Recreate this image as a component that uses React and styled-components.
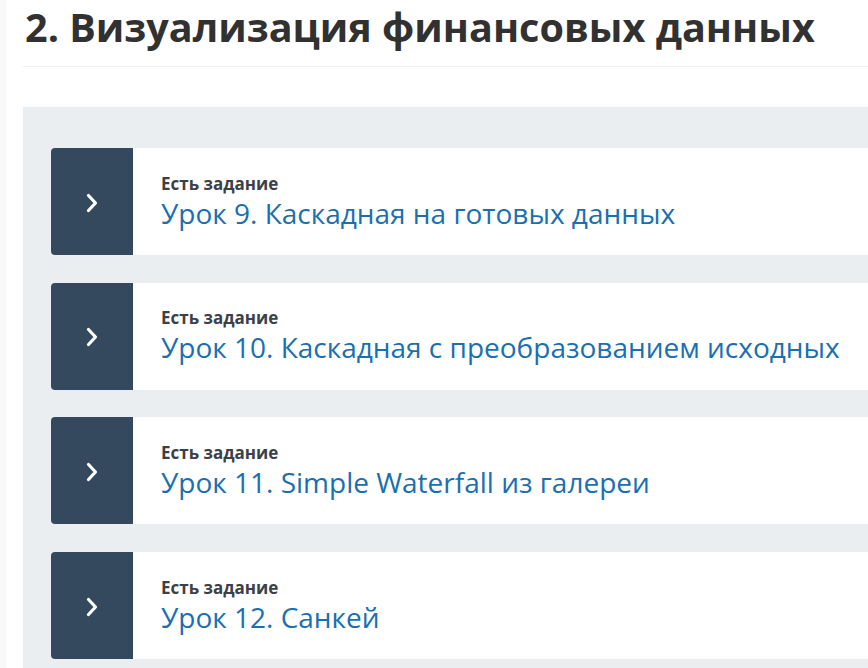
import React from 'react';
import styled, { createGlobalStyle } from 'styled-components';

const GlobalStyle = createGlobalStyle`
  html, body {
    margin: 0;
    padding: 0;
    background: #ffffff;
    overflow: hidden;
  }
  body {
    font-family: "Open Sans", Lato, Arial, sans-serif;
  }
`;

const Page = styled.div`
  display: flex;
  min-height: 668px;
`;

const Edge = styled.div`
  width: 6px;
  flex: none;
  background: #f8fafa;
`;

const Main = styled.main`
  flex: 1;
  padding-left: 17px;
  min-width: 0;
`;

const Heading = styled.h2`
  margin: 0;
  padding: 1px 0 0 2px;
  height: 67px;
  box-sizing: border-box;
  font-size: 39.6px;
  line-height: 52px;
  font-weight: 700;
  color: #313131;
  white-space: nowrap;
  border-bottom: 1px solid #eeeeee;
`;

const Panel = styled.section`
  margin-top: 40px;
  width: 1100px;
  background: #ebeef0;
  padding: 41px 28px;
  display: flex;
  flex-direction: column;
  gap: 27.7px;
`;

const Card = styled.a`
  display: flex;
  height: 107px;
  background: #ffffff;
  border-radius: 4px;
  text-decoration: none;
  overflow: hidden;
`;

const Toggle = styled.div`
  width: 82px;
  flex: none;
  background: #34495e;
  display: flex;
  align-items: center;
  justify-content: center;
  padding-top: 2px;
  box-sizing: border-box;
`;

const Body = styled.div`
  padding-left: 28px;
  display: flex;
  flex-direction: column;
  justify-content: center;
`;

const Tag = styled.div`
  font-size: 17px;
  font-weight: 700;
  color: #3b4148;
  line-height: 20px;
  margin-bottom: 2px;
`;

const Title = styled.div`
  font-size: 28px;
  font-weight: 400;
  color: #1a6fb1;
  line-height: 34px;
  white-space: nowrap;
`;

const Chevron = () => (
  <svg width="14" height="20" viewBox="0 0 14 20">
    <path d="M3.5 2.5L10.5 10 3.5 17.5" fill="none" stroke="#fff" strokeWidth="3.2" strokeLinecap="round" strokeLinejoin="round" />
  </svg>
);

const lessons = [
  'Урок 9. Каскадная на готовых данных',
  'Урок 10. Каскадная с преобразованием исходных',
  'Урок 11. Simple Waterfall из галереи',
  'Урок 12. Санкей',
];

export default function App() {
  return (
    <Page>
      <GlobalStyle />
      <Edge />
      <Main>
        <Heading>2. Визуализация финансовых данных</Heading>
        <Panel>
          {lessons.map((title) => (
            <Card key={title} href="#">
              <Toggle>
                <Chevron />
              </Toggle>
              <Body>
                <Tag>Есть задание</Tag>
                <Title>{title}</Title>
              </Body>
            </Card>
          ))}
        </Panel>
      </Main>
    </Page>
  );
}
